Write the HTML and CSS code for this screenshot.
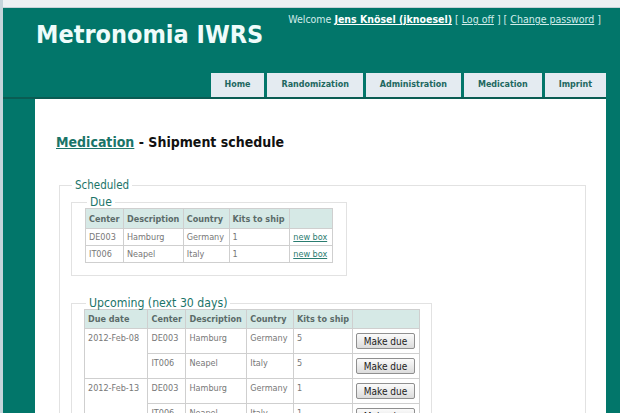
FILE: index.html
```html
<!DOCTYPE html>
<html lang="en">
<head>
  <meta charset="UTF-8">
  <title>Metronomia IWRS - Shipment schedule</title>
  <link rel="stylesheet" href="styles.css">
</head>
<body>
  <div class="topbar"></div>

  <div class="header">
    <div class="logo">Metronomia IWRS</div>
    <div class="login">
      Welcome <a href="#" class="user">Jens Knösel (jknoesel)</a>
      [ <a href="#">Log off</a> ] [ <a href="#">Change password</a> ]
    </div>
  </div>

  <ul class="menu">
    <li><a href="#">Home</a></li>
    <li><a href="#">Randomization</a></li>
    <li><a href="#">Administration</a></li>
    <li><a href="#">Medication</a></li>
    <li><a href="#">Imprint</a></li>
  </ul>

  <div class="main">
    <h2><a href="#">Medication</a> - Shipment schedule</h2>

    <fieldset class="outer">
      <legend>Scheduled</legend>

      <fieldset class="due">
        <legend>Due</legend>
        <table class="grid">
          <colgroup>
            <col style="width: 38px"><col style="width: 60px"><col style="width: 46px"><col style="width: 61px"><col style="width: 43px">
          </colgroup>
          <tr>
            <th>Center</th><th>Description</th><th>Country</th><th>Kits to ship</th><th></th>
          </tr>
          <tr>
            <td>DE003</td><td>Hamburg</td><td>Germany</td><td>1</td><td><a href="#">new box</a></td>
          </tr>
          <tr>
            <td>IT006</td><td>Neapel</td><td>Italy</td><td>1</td><td><a href="#">new box</a></td>
          </tr>
        </table>
      </fieldset>

      <fieldset class="upcoming">
        <legend>Upcoming (next 30 days)</legend>
        <table class="grid tall">
          <colgroup>
            <col style="width: 64px"><col style="width: 38px"><col style="width: 61px"><col style="width: 47px"><col style="width: 59px"><col style="width: 67px">
          </colgroup>
          <tr>
            <th>Due date</th><th>Center</th><th>Description</th><th>Country</th><th>Kits to ship</th><th></th>
          </tr>
          <tr>
            <td rowspan="2">2012-Feb-08</td><td>DE003</td><td>Hamburg</td><td>Germany</td><td>5</td>
            <td class="act"><button>Make due</button></td>
          </tr>
          <tr>
            <td>IT006</td><td>Neapel</td><td>Italy</td><td>5</td>
            <td class="act"><button>Make due</button></td>
          </tr>
          <tr>
            <td rowspan="2">2012-Feb-13</td><td>DE003</td><td>Hamburg</td><td>Germany</td><td>1</td>
            <td class="act"><button>Make due</button></td>
          </tr>
          <tr>
            <td>IT006</td><td>Neapel</td><td>Italy</td><td>1</td>
            <td class="act"><button>Make due</button></td>
          </tr>
        </table>
      </fieldset>
    </fieldset>
  </div>
</body>
</html>
```

FILE: styles.css
```css
html, body {
  height: 100%;
}
body {
  margin: 0;
  font-family: "DejaVu Sans Condensed", "DejaVu Sans", Verdana, sans-serif;
  background-color: #02766a;
  border-left: 3px solid #c5d4da;
  overflow: hidden;
}
a {
  color: #1a7468;
}
.topbar {
  height: 7px;
  background-color: #eef1f3;
  border-bottom: 1px solid #c9d3d8;
}
.header {
  display: flex;
  justify-content: space-between;
  height: 65px;
}
.logo {
  margin: 12px 0 0 33px;
  font-size: 25px;
  font-weight: bold;
  color: #effcfb;
}
.login {
  margin: 5px 19px 0 0;
  font-size: 10.5px;
  color: #d2ecea;
}
.login a {
  color: #d2ecea;
}
.login .user {
  font-weight: bold;
  color: #ffffff;
}
.menu {
  display: flex;
  justify-content: flex-end;
  gap: 3px;
  list-style: none;
  margin: 0 14px 0 0;
  padding: 0;
  border-bottom: 2px solid #0a5c53;
}
.menu a {
  display: block;
  height: 24px;
  line-height: 24px;
  padding: 0 14px;
  background-color: #e4ebf1;
  color: #21675f;
  font-family: "DejaVu Sans", Verdana, sans-serif;
  font-size: 8px;
  font-weight: bold;
  text-decoration: none;
}
.main {
  background-color: #ffffff;
  margin: 0 14px 0 32px;
  padding: 35px 21px 0 21px;
  height: 400px;
}
h2 {
  margin: 0 0 28px 0;
  font-size: 14px;
  color: #111111;
}
h2 a {
  color: #1a7468;
}
fieldset {
  border: 1px solid #e2e2e2;
  margin: 0;
}
legend {
  color: #1a7468;
  padding: 0 3px;
}
.outer {
  width: 502px;
  margin-left: 3px;
  padding: 5px 12px 10px 11px;
}
.outer > legend {
  font-size: 11.5px;
  margin-left: 1px;
}
.due {
  width: 248px;
  padding: 0 13px 12px 13px;
}
.due > legend {
  font-size: 12px;
  line-height: 11px;
  margin-left: 2px;
}
.upcoming {
  width: 336px;
  margin-top: 22px;
  padding: 0 11px 11px 12px;
}
.upcoming > legend {
  font-size: 12.2px;
  line-height: 11px;
  margin-left: 2px;
}
.grid {
  table-layout: fixed;
  border-collapse: collapse;
  font-size: 9px;
  color: #777777;
  white-space: nowrap;
}
.grid th, .grid td {
  border: 1px solid #cfcfcf;
  padding: 0 3px;
  text-align: left;
  vertical-align: middle;
  overflow: hidden;
}
.grid th {
  height: 19px;
  background-color: #d6e9e6;
  color: #5b6b69;
}
.grid td {
  height: 16px;
}
.grid td a {
  color: #2a7c70;
}
.tall th {
  height: 18px;
}
.tall td {
  height: 20px;
  vertical-align: top;
  padding-top: 4px;
}
.tall td.act {
  vertical-align: middle;
  padding: 0 3px;
}
button {
  width: 59px;
  height: 16px;
  padding: 0;
  font-family: "DejaVu Sans Condensed", "DejaVu Sans", Verdana, sans-serif;
  font-size: 10px;
  color: #222222;
  background: linear-gradient(#fbfbfb, #dcdcdc);
  border: 1px solid #8f8f8f;
  border-radius: 2px;
}
```
